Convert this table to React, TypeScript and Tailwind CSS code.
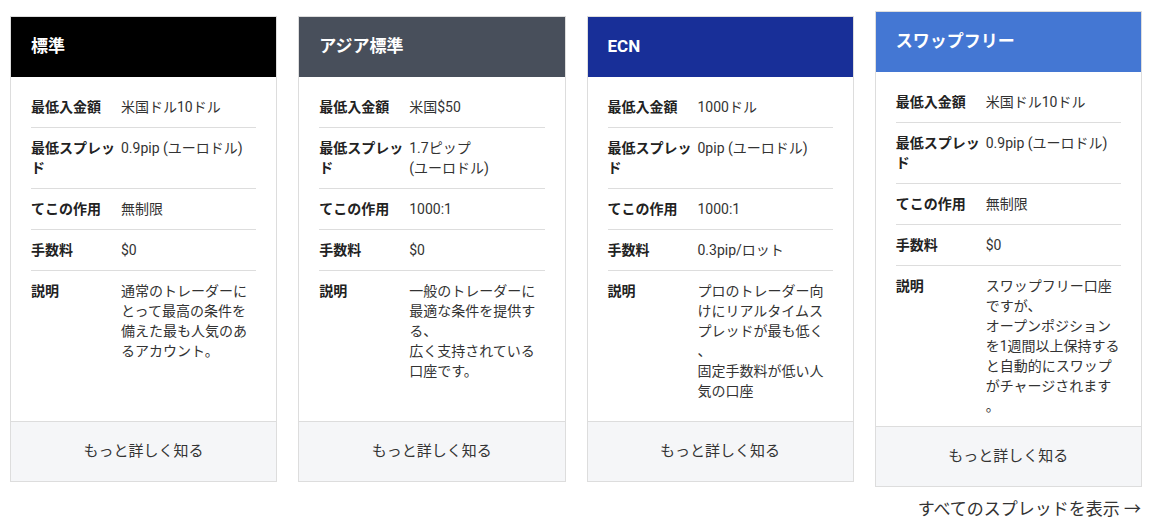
import React from 'react';

type Plan = {
  name: string;
  headerClass: string;
  minDeposit: string;
  minSpread: React.ReactNode;
  leverage: string;
  commission: string;
  description: React.ReactNode;
  featured?: boolean;
};

const plans: Plan[] = [
  {
    name: '標準',
    headerClass: 'bg-black',
    minDeposit: '米国ドル10ドル',
    minSpread: '0.9pip (ユーロドル)',
    leverage: '無制限',
    commission: '$0',
    description: '通常のトレーダーにとって最高の条件を備えた最も人気のあるアカウント。',
  },
  {
    name: 'アジア標準',
    headerClass: 'bg-[#484f5b]',
    minDeposit: '米国$50',
    minSpread: (
      <>
        1.7ピップ
        <br />
        (ユーロドル)
      </>
    ),
    leverage: '1000:1',
    commission: '$0',
    description: (
      <>
        一般のトレーダーに最適な条件を提供する、
        <br />
        広く支持されている口座です。
      </>
    ),
  },
  {
    name: 'ECN',
    headerClass: 'bg-[#182f98]',
    minDeposit: '1000ドル',
    minSpread: '0pip (ユーロドル)',
    leverage: '1000:1',
    commission: '0.3pip/ロット',
    description: (
      <>
        プロのトレーダー向けにリアルタイムスプレッドが最も低く、
        <br />
        固定手数料が低い人気の口座
      </>
    ),
  },
  {
    name: 'スワップフリー',
    headerClass: 'bg-[#4477d3]',
    minDeposit: '米国ドル10ドル',
    minSpread: '0.9pip (ユーロドル)',
    leverage: '無制限',
    commission: '$0',
    description: (
      <>
        スワップフリー口座ですが、
        <br />
        オープンポジションを1週間以上保持すると自動的にスワップがチャージされます。
      </>
    ),
    featured: true,
  },
];

function Row({ label, children, last }: { label: string; children: React.ReactNode; last?: boolean }) {
  return (
    <div className={`flex py-[10px] text-[14px] leading-[20px] ${last ? '' : 'border-b border-[#dddddd]'}`}>
      <div className="w-[90px] shrink-0 font-bold text-[#222]">{label}</div>
      <div className="min-w-0 flex-1 text-[#333]">{children}</div>
    </div>
  );
}

function PlanCard({ plan }: { plan: Plan }) {
  return (
    <div
      className={`flex flex-col border border-[#dddddd] bg-white ${plan.featured ? '-my-[5px]' : ''}`}
    >
      <div className={`flex h-[60px] items-center px-5 text-[17px] font-bold text-white ${plan.headerClass}`}>
        {plan.name}
      </div>
      <div className="flex-1 px-5 pt-[10px]">
        <Row label="最低入金額">{plan.minDeposit}</Row>
        <Row label="最低スプレッド">{plan.minSpread}</Row>
        <Row label="てこの作用">{plan.leverage}</Row>
        <Row label="手数料">{plan.commission}</Row>
        <Row label="説明" last>
          <div className="[line-break:anywhere]">{plan.description}</div>
        </Row>
      </div>
      <div className="flex h-[60px] items-center justify-center border-t border-[#dddddd] bg-[#f5f6f8] text-[15px] text-[#333]">
        もっと詳しく知る
      </div>
    </div>
  );
}

export default function App() {
  return (
    <div
      className="min-h-[532px] bg-white px-[10px] pt-4"
      style={{ fontFamily: 'Roboto, "Noto Sans CJK JP", sans-serif' }}
    >
      <div className="grid grid-cols-4 gap-[21px]">
        {plans.map((p) => (
          <PlanCard key={p.name} plan={p} />
        ))}
      </div>
      <div className="mt-[15px] flex justify-end pr-px">
        <a href="#" className="text-[17px] leading-[24px] text-[#333]">
          すべてのスプレッドを表示 →
        </a>
      </div>
    </div>
  );
}
